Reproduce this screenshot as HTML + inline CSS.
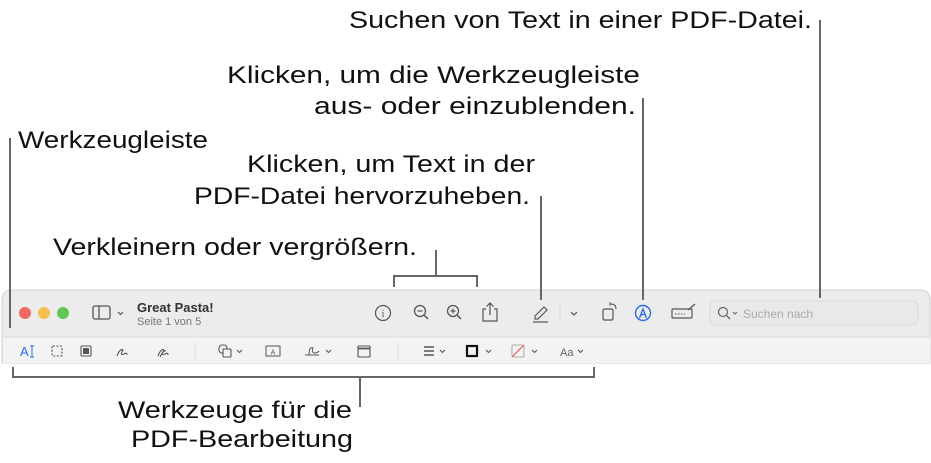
<!DOCTYPE html>
<html><head><meta charset="utf-8"><style>
html,body{margin:0;padding:0;background:#fff;width:931px;height:463px;overflow:hidden;font-family:"Liberation Sans",sans-serif}
svg{position:absolute;left:0;top:0}
</style></head><body>
<svg width="931" height="463" viewBox="0 0 931 463" xmlns="http://www.w3.org/2000/svg" font-family="Liberation Sans, sans-serif">
<!-- window -->
<path d="M2,363 V300 Q2,290 12,290 H920 Q930,290 930,300 V363 Z" fill="#ececec" stroke="#d0d0d0" stroke-width="1"/>
<rect x="3" y="337" width="927" height="26" fill="#f3f3f3"/>
<line x1="3" y1="337" x2="930" y2="337" stroke="#dcdcdc"/>
<!-- traffic lights -->
<circle cx="25" cy="313" r="6" fill="#ed6a5e"/>
<circle cx="44" cy="313" r="6" fill="#f5bf4f"/>
<circle cx="63" cy="313" r="6" fill="#61c554"/>
<!-- sidebar -->
<rect x="93" y="306" width="17" height="13" rx="2" fill="none" stroke="#555" stroke-width="1.3"/>
<line x1="99" y1="306" x2="99" y2="319" stroke="#555" stroke-width="1.3"/>
<path d="M118,312 l2.5,2.5 l2.5,-2.5" fill="none" stroke="#555" stroke-width="1.2"/>
<text x="137" y="312" font-size="13" font-weight="bold" fill="#333">Great Pasta!</text>
<text x="137" y="325" font-size="11" fill="#777">Seite 1 von 5</text>
<!-- info -->
<circle cx="383" cy="313" r="7.5" fill="none" stroke="#555" stroke-width="1.2"/>
<text x="383" y="317" font-size="10" text-anchor="middle" fill="#555" font-family="Liberation Serif, serif">i</text>
<!-- zoom out/in -->
<circle cx="420" cy="311" r="5.5" fill="none" stroke="#555" stroke-width="1.3"/><line x1="424" y1="315" x2="428" y2="319" stroke="#555" stroke-width="1.5"/><line x1="417.5" y1="311" x2="422.5" y2="311" stroke="#555" stroke-width="1.2"/>
<circle cx="453" cy="311" r="5.5" fill="none" stroke="#555" stroke-width="1.3"/><line x1="457" y1="315" x2="461" y2="319" stroke="#555" stroke-width="1.5"/><line x1="450.5" y1="311" x2="455.5" y2="311" stroke="#555" stroke-width="1.2"/><line x1="453" y1="308.5" x2="453" y2="313.5" stroke="#555" stroke-width="1.2"/>
<!-- share -->
<path d="M486,309 h-3 v12 h14 v-12 h-3 M490,315 v-12 M486.5,306.5 l3.5,-3.5 l3.5,3.5" fill="none" stroke="#555" stroke-width="1.2"/>
<!-- pen -->
<path d="M535,316 l9,-9 l3,3 l-9,9 h-3 z" fill="none" stroke="#555" stroke-width="1.2"/><line x1="533" y1="322" x2="548" y2="322" stroke="#555" stroke-width="1.2"/>
<line x1="560" y1="303" x2="560" y2="322" stroke="#ddd"/>
<path d="M571,312 l3,3 l3,-3" fill="none" stroke="#555" stroke-width="1.2"/>
<!-- rotate -->
<rect x="603" y="309" width="10" height="11" rx="1.5" fill="none" stroke="#555" stroke-width="1.2"/>
<path d="M611,304 q5,0 5,5 M609.5,302.5 l1.5,1.5 l-1.5,1.5" fill="none" stroke="#555" stroke-width="1.1"/>
<!-- markup -->
<circle cx="643" cy="313" r="7.5" fill="none" stroke="#2a6be6" stroke-width="1.4"/>
<path d="M639.5,318 l3.5,-9 l3.5,9 M641,314.5 h4" fill="none" stroke="#2a6be6" stroke-width="1.3"/>
<!-- sign/keyboard -->
<rect x="672" y="309" width="20" height="9" rx="1" fill="none" stroke="#555" stroke-width="1.2"/>
<path d="M675,314 h10" stroke="#555" stroke-dasharray="1.5,1.5"/>
<line x1="688" y1="310" x2="695" y2="304" stroke="#555" stroke-width="1.3"/>
<!-- search -->
<rect x="710" y="301" width="208" height="24" rx="5" fill="#e9e9e9" stroke="#dcdcdc"/>
<circle cx="723" cy="312" r="4.5" fill="none" stroke="#666" stroke-width="1.2"/><line x1="726.5" y1="315.5" x2="730" y2="319" stroke="#666" stroke-width="1.3"/>
<path d="M733,312 l2,2 l2,-2" fill="none" stroke="#666" stroke-width="1.1"/>
<text x="743" y="318" font-size="12" fill="#aaa">Suchen nach</text>
<!-- second row -->
<text x="20" y="356" font-size="13" fill="#2a6be6">A</text><path d="M30,346 h4 M32,346 v11 M30,357 h4" stroke="#2a6be6" stroke-width="1"/>
<rect x="52" y="346" width="10" height="10" rx="1" fill="none" stroke="#555" stroke-dasharray="2,1.5" stroke-width="1.1"/>
<rect x="81" y="346" width="10" height="10" rx="1" fill="none" stroke="#555" stroke-width="1.1"/><rect x="83" y="348" width="6" height="6" fill="#555"/>
<path d="M117,356 q3,-8 6,-6 q-4,6 1,4 q3,-2 3,1" fill="none" stroke="#555" stroke-width="1.1"/>
<path d="M158,356 q3,-8 6,-6 q-4,6 1,4 q3,-2 3,1 M160,357 q3,-7 6,-6" fill="none" stroke="#555" stroke-width="1.1"/>
<line x1="195" y1="343" x2="195" y2="360" stroke="#ddd"/>
<rect x="219" y="345" width="8" height="8" rx="3" fill="none" stroke="#555" stroke-width="1.1"/><rect x="223" y="349" width="8" height="8" rx="1" fill="#f3f3f3" stroke="#555" stroke-width="1.1"/>
<path d="M237,350 l2.5,2.5 l2.5,-2.5" fill="none" stroke="#555" stroke-width="1.1"/>
<rect x="266" y="346" width="14" height="10" fill="none" stroke="#555" stroke-width="1"/><text x="273" y="354.5" font-size="7" text-anchor="middle" fill="#555">A</text>
<path d="M305,355 h14 M309,355 q0,-9 4,-7 q-2,5 2,5 q2,0 4,-2" fill="none" stroke="#555" stroke-width="1"/>
<path d="M326,350 l2.5,2.5 l2.5,-2.5" fill="none" stroke="#555" stroke-width="1.1"/>
<rect x="358" y="346" width="12" height="11" rx="1" fill="none" stroke="#555" stroke-width="1.1"/><line x1="358" y1="348.5" x2="370" y2="348.5" stroke="#555" stroke-width="1.8"/>
<line x1="398" y1="343" x2="398" y2="360" stroke="#ddd"/>
<path d="M424,347 h10 M424,351 h10 M424,355 h10" stroke="#555" stroke-width="1.6"/>
<path d="M440,350 l2.5,2.5 l2.5,-2.5" fill="none" stroke="#555" stroke-width="1.1"/>
<rect x="467" y="346" width="10" height="10" fill="none" stroke="#111" stroke-width="2.2"/>
<path d="M486,350 l2.5,2.5 l2.5,-2.5" fill="none" stroke="#555" stroke-width="1.1"/>
<rect x="512" y="345" width="12" height="12" rx="1" fill="none" stroke="#aaa" stroke-width="1"/><line x1="512.5" y1="356.5" x2="523.5" y2="345.5" stroke="#e44" stroke-width="1"/>
<path d="M532,350 l2.5,2.5 l2.5,-2.5" fill="none" stroke="#555" stroke-width="1.1"/>
<text x="560" y="356" font-size="11" fill="#666">Aa</text>
<path d="M578,350 l2.5,2.5 l2.5,-2.5" fill="none" stroke="#555" stroke-width="1.1"/>
<!-- callout lines -->
<g stroke="#666" stroke-width="2" fill="none">
<line x1="820" y1="20" x2="820" y2="298"/>
<line x1="643" y1="98" x2="643" y2="300"/>
<line x1="541" y1="196" x2="541" y2="300"/>
<path d="M394,287 V276 H477 V287 M436,276 V250"/>
<line x1="10" y1="138" x2="10" y2="328"/>
<path d="M13,367 V377 H594 V367 M360,377 V407"/>
</g>
<!-- labels -->
<g font-size="24" fill="#111">
<text x="349" y="28" textLength="463" lengthAdjust="spacingAndGlyphs">Suchen von Text in einer PDF-Datei.</text>
<text x="227" y="83" textLength="413" lengthAdjust="spacingAndGlyphs">Klicken, um die Werkzeugleiste</text>
<text x="314" y="114" textLength="322" lengthAdjust="spacingAndGlyphs">aus- oder einzublenden.</text>
<text x="18" y="148" textLength="190" lengthAdjust="spacingAndGlyphs">Werkzeugleiste</text>
<text x="247" y="172" textLength="288" lengthAdjust="spacingAndGlyphs">Klicken, um Text in der</text>
<text x="194" y="204" textLength="336" lengthAdjust="spacingAndGlyphs">PDF-Datei hervorzuheben.</text>
<text x="53" y="255" textLength="364" lengthAdjust="spacingAndGlyphs">Verkleinern oder vergrößern.</text>
<text x="118" y="418" textLength="234" lengthAdjust="spacingAndGlyphs">Werkzeuge für die</text>
<text x="131" y="447" textLength="222" lengthAdjust="spacingAndGlyphs">PDF-Bearbeitung</text>
</g>
</svg>
</body></html>
